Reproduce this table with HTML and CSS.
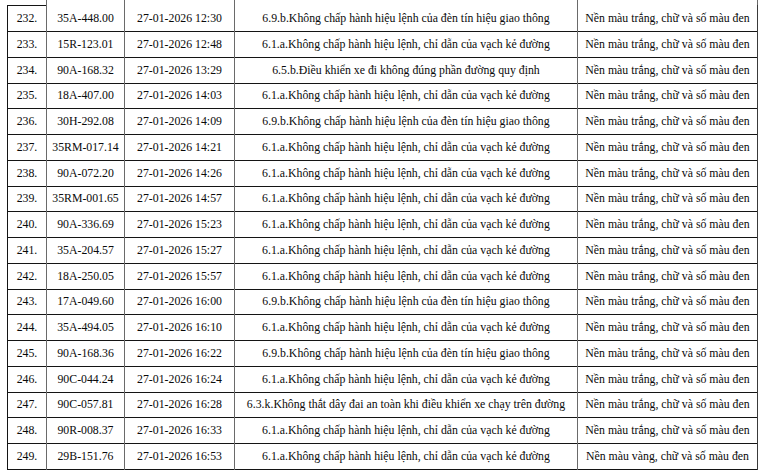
FILE: index.html
```html
<!DOCTYPE html>
<html lang="vi">
<head>
<meta charset="utf-8">
<title>Danh sách vi phạm</title>
<link rel="stylesheet" href="styles.css">
</head>
<body>
<table class="violations">
  <colgroup>
    <col class="c-no"><col class="c-plate"><col class="c-time"><col class="c-act"><col class="c-color">
  </colgroup>
  <tbody>
    <tr class="cut"><td class="blank"></td><td></td><td></td><td></td><td></td></tr>
    <tr class="first"><td class="top">232.</td><td>35A-448.00</td><td>27-01-2026 12:30</td><td>6.9.b.Không chấp hành hiệu lệnh của đèn tín hiệu giao thông</td><td>Nền màu trắng, chữ và số màu đen</td></tr>
    <tr><td>233.</td><td>15R-123.01</td><td>27-01-2026 12:48</td><td>6.1.a.Không chấp hành hiệu lệnh, chỉ dẫn của vạch kẻ đường</td><td>Nền màu trắng, chữ và số màu đen</td></tr>
    <tr><td>234.</td><td>90A-168.32</td><td>27-01-2026 13:29</td><td>6.5.b.Điều khiển xe đi không đúng phần đường quy định</td><td>Nền màu trắng, chữ và số màu đen</td></tr>
    <tr><td>235.</td><td>18A-407.00</td><td>27-01-2026 14:03</td><td>6.1.a.Không chấp hành hiệu lệnh, chỉ dẫn của vạch kẻ đường</td><td>Nền màu trắng, chữ và số màu đen</td></tr>
    <tr><td>236.</td><td>30H-292.08</td><td>27-01-2026 14:09</td><td>6.9.b.Không chấp hành hiệu lệnh của đèn tín hiệu giao thông</td><td>Nền màu trắng, chữ và số màu đen</td></tr>
    <tr><td>237.</td><td>35RM-017.14</td><td>27-01-2026 14:21</td><td>6.1.a.Không chấp hành hiệu lệnh, chỉ dẫn của vạch kẻ đường</td><td>Nền màu trắng, chữ và số màu đen</td></tr>
    <tr><td>238.</td><td>90A-072.20</td><td>27-01-2026 14:26</td><td>6.1.a.Không chấp hành hiệu lệnh, chỉ dẫn của vạch kẻ đường</td><td>Nền màu trắng, chữ và số màu đen</td></tr>
    <tr><td>239.</td><td>35RM-001.65</td><td>27-01-2026 14:57</td><td>6.1.a.Không chấp hành hiệu lệnh, chỉ dẫn của vạch kẻ đường</td><td>Nền màu trắng, chữ và số màu đen</td></tr>
    <tr><td>240.</td><td>90A-336.69</td><td>27-01-2026 15:23</td><td>6.1.a.Không chấp hành hiệu lệnh, chỉ dẫn của vạch kẻ đường</td><td>Nền màu trắng, chữ và số màu đen</td></tr>
    <tr><td>241.</td><td>35A-204.57</td><td>27-01-2026 15:27</td><td>6.1.a.Không chấp hành hiệu lệnh, chỉ dẫn của vạch kẻ đường</td><td>Nền màu trắng, chữ và số màu đen</td></tr>
    <tr><td>242.</td><td>18A-250.05</td><td>27-01-2026 15:57</td><td>6.1.a.Không chấp hành hiệu lệnh, chỉ dẫn của vạch kẻ đường</td><td>Nền màu trắng, chữ và số màu đen</td></tr>
    <tr><td>243.</td><td>17A-049.60</td><td>27-01-2026 16:00</td><td>6.9.b.Không chấp hành hiệu lệnh của đèn tín hiệu giao thông</td><td>Nền màu trắng, chữ và số màu đen</td></tr>
    <tr><td>244.</td><td>35A-494.05</td><td>27-01-2026 16:10</td><td>6.1.a.Không chấp hành hiệu lệnh, chỉ dẫn của vạch kẻ đường</td><td>Nền màu trắng, chữ và số màu đen</td></tr>
    <tr><td>245.</td><td>90A-168.36</td><td>27-01-2026 16:22</td><td>6.9.b.Không chấp hành hiệu lệnh của đèn tín hiệu giao thông</td><td>Nền màu trắng, chữ và số màu đen</td></tr>
    <tr><td>246.</td><td>90C-044.24</td><td>27-01-2026 16:24</td><td>6.1.a.Không chấp hành hiệu lệnh, chỉ dẫn của vạch kẻ đường</td><td>Nền màu trắng, chữ và số màu đen</td></tr>
    <tr><td>247.</td><td>90C-057.81</td><td>27-01-2026 16:28</td><td>6.3.k.Không thắt dây đai an toàn khi điều khiển xe chạy trên đường</td><td>Nền màu trắng, chữ và số màu đen</td></tr>
    <tr><td>248.</td><td>90R-008.37</td><td>27-01-2026 16:33</td><td>6.1.a.Không chấp hành hiệu lệnh, chỉ dẫn của vạch kẻ đường</td><td>Nền màu trắng, chữ và số màu đen</td></tr>
    <tr><td>249.</td><td>29B-151.76</td><td>27-01-2026 16:53</td><td>6.1.a.Không chấp hành hiệu lệnh, chỉ dẫn của vạch kẻ đường</td><td>Nền màu vàng, chữ và số màu đen</td></tr>
  </tbody>
</table>
</body>
</html>
```

FILE: styles.css
```css
html, body {
  margin: 0;
  padding: 0;
  background: #ffffff;
}

body {
  font-family: "Liberation Serif", "Times New Roman", serif;
  font-size: 11.8px;
  color: #0a0a0a;
}

.violations {
  margin-left: 7px;
  border-collapse: collapse;
  table-layout: fixed;
  width: 750px;
}

.c-no { width: 39px; }
.c-plate { width: 78px; }
.c-time { width: 110px; }
.c-act { width: 343px; }
.c-color { width: 180px; }

.violations tr {
  height: 25.76px;
  border-bottom: 1px solid #141414;
}

.violations td {
  padding: 0;
  text-align: center;
  vertical-align: middle;
  white-space: nowrap;
  border-left: 1px solid #6a6a6a;
  border-right: 1px solid #6a6a6a;
}

.violations tr.cut {
  height: 5px;
  border-bottom: none;
}

.violations tr.cut td.blank {
  border-left: none;
}

.violations tr.first {
  height: 26.5px;
}

.violations td.top {
  border-top: 1px solid #141414;
}

.violations tr:not(.cut) td:first-child {
  border-left-color: #141414;
}

.violations tr:not(.cut) td:last-child {
  border-right-color: #3a3a3a;
}
```
